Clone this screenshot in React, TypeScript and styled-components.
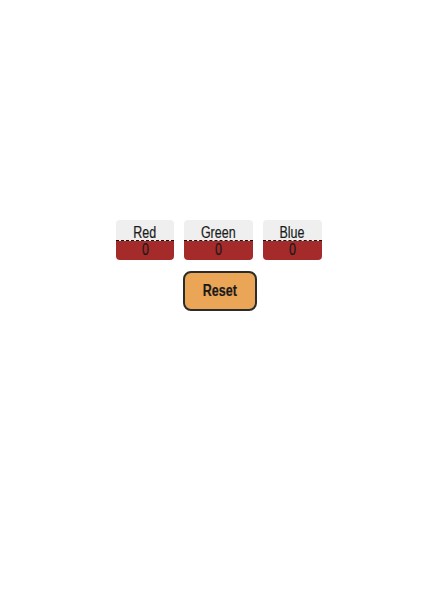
import React, { useState } from "react";
import styled, { createGlobalStyle } from "styled-components";

const Global = createGlobalStyle`
  html, body { margin: 0; padding: 0; background: #ffffff; }
  body { font-family: "Liberation Sans", Arial, sans-serif; }
`;

const Page = styled.div`
  width: 440px;
  height: 612px;
  display: flex;
  flex-direction: column;
  align-items: center;
  padding-top: 220px;
  box-sizing: border-box;
`;

const Row = styled.div`
  display: flex;
  gap: 10px;
  margin-right: 2px;
`;

const Channel = styled.div<{ $w: number }>`
  width: ${(p) => p.$w}px;
  display: flex;
  flex-direction: column;
  border-radius: 4px;
  overflow: hidden;
`;

const Condensed = styled.span`
  display: inline-block;
  transform: scaleX(0.78);
  white-space: nowrap;
  -webkit-text-stroke: 0.2px currentColor;
`;

const Label = styled.div`
  background: #efefef;
  height: 20px;
  display: flex;
  align-items: flex-end;
  justify-content: center;
  font-size: 16px;
  line-height: 14px;
  color: #1a1a1a;
  border-bottom: 1px dashed #111;
`;

const Value = styled.div`
  background: #a52a2a;
  height: 19px;
  padding-top: 2px;
  box-sizing: border-box;
  display: flex;
  align-items: flex-start;
  justify-content: center;
  font-size: 16px;
  line-height: 14px;
  color: #1a1a1a;
`;

const Button = styled.button`
  margin-top: 11px;
  width: 74px;
  height: 40px;
  padding: 0;
  box-sizing: border-box;
  background: #eba556;
  border: 2px solid #2b2b2b;
  border-radius: 8px;
  font-family: inherit;
  font-weight: bold;
  font-size: 16px;
  color: #1a1a1a;
  cursor: pointer;
`;

const channels = [
  { name: "Red", w: 58 },
  { name: "Green", w: 69 },
  { name: "Blue", w: 59 },
] as const;

export default function App() {
  const [vals, setVals] = useState<Record<string, number>>({ Red: 0, Green: 0, Blue: 0 });
  return (
    <Page>
      <Global />
      <Row>
        {channels.map((c) => (
          <Channel key={c.name} $w={c.w}>
            <Label>
              <Condensed>{c.name}</Condensed>
            </Label>
            <Value>
              <Condensed>{vals[c.name]}</Condensed>
            </Value>
          </Channel>
        ))}
      </Row>
      <Button onClick={() => setVals({ Red: 0, Green: 0, Blue: 0 })}>
        <Condensed>Reset</Condensed>
      </Button>
    </Page>
  );
}
